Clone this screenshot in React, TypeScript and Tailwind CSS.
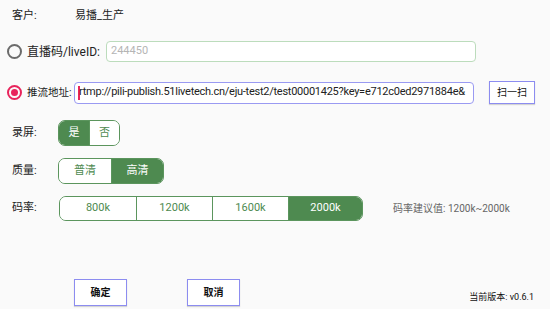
import React, {useState} from 'react';

const font = {fontFamily: 'Roboto, "Noto Sans CJK SC", sans-serif'};

// Radio button in Android style
const Radio = ({checked}: {checked: boolean}) => (
  <span
    className={`flex items-center justify-center w-[15px] h-[15px] rounded-full border-2 ${checked ? 'border-[#e8245c]' : 'border-[#6b6b6b]'}`}>
    {checked && <span className="w-[7px] h-[7px] rounded-full bg-[#e8245c]"/>}
  </span>
);

const Segment = ({items, active, widths}: {items: string[], active: number, widths: string[]}) => (
  <div className="flex rounded-[7px] border border-[#5b955d] overflow-hidden">
    {items.map((item, i) => <div
      key={i}
      className={`flex items-center justify-center text-[11px] ${widths[i]} ${i > 0 ? 'border-l border-[#5b955d]' : ''} ${i === active ? 'bg-[#4e8a50] text-white' : 'bg-white text-[#4e8a50]'}`}>
      {item}
    </div>)}
  </div>
);

const App = () => {
  const [record] = useState(0);
  const [quality] = useState(1);
  const [rate] = useState(3);

  return (
    <div className="w-[550px] h-[309px] bg-[#fafafa] text-[#222] relative overflow-hidden" style={font}>
      {/* customer */}
      <div className="flex items-center h-[20px] mt-[6px] text-[11px]">
        <span className="ml-[12px] w-[63px]">客户:</span>
        <span>易播_生产</span>
      </div>

      {/* liveID */}
      <div className="flex items-center mt-[15px] h-[21px]">
        <span className="ml-[7px]"><Radio checked={false}/></span>
        <span className="ml-[5px] w-[79px] shrink-0 whitespace-nowrap text-[12px]">直播码/liveID:</span>
        <div className="w-[370px] h-[21px] rounded-[4px] border border-[#bcdcbc] bg-white flex items-center px-[4px] text-[11px] text-[#b5b5b5]">
          244450
        </div>
      </div>

      {/* push url */}
      <div className="flex items-center mt-[19px] h-[23px]">
        <span className="ml-[7px]"><Radio checked={true}/></span>
        <span className="ml-[5px] w-[47px] shrink-0 whitespace-nowrap text-[10.5px]">推流地址:</span>
        <div className="w-[400px] shrink-0 h-[22px] rounded-[4px] border border-[#9a9af2] bg-white flex items-center pl-[3px] text-[11px] text-[#222] overflow-hidden whitespace-nowrap">
          <span className="w-[2px] h-[14px] bg-[#e8245c] shrink-0"/>
          <span className="ml-[-1px] tracking-[-0.26px]">rtmp://pili-publish.51livetech.cn/eju-test2/test00001425?key=e712c0ed2971884e&amp;</span>
        </div>
        <button
          className="ml-[15px] w-[46px] h-[23px] shrink-0 border border-[#8c8cf0] bg-white text-[10px] text-[#111] shadow-[0_1px_1px_rgba(0,0,0,0.15)]">
          扫一扫
        </button>
      </div>

      {/* record */}
      <div className="flex items-center mt-[16px] h-[26px]">
        <span className="ml-[12px] w-[46px] text-[11px]">录屏:</span>
        <div className="h-[26px] flex">
          <Segment items={['是', '否']} active={record} widths={['w-[30px]', 'w-[30px]']}/>
        </div>
      </div>

      {/* quality */}
      <div className="flex items-center mt-[12px] h-[26px]">
        <span className="ml-[12px] w-[46px] text-[11px]">质量:</span>
        <div className="h-[26px] flex">
          <Segment items={['普清', '高清']} active={quality} widths={['w-[52px]', 'w-[52px]']}/>
        </div>
      </div>

      {/* bitrate */}
      <div className="flex items-center mt-[12px] h-[25px]">
        <span className="ml-[12px] w-[47px] text-[11px]">码率:</span>
        <div className="h-[25px] flex">
          <Segment items={['800k', '1200k', '1600k', '2000k']} active={rate}
                   widths={['w-[76px]', 'w-[76px]', 'w-[76px]', 'w-[74px]']}/>
        </div>
        <span className="ml-[30px] text-[10px] text-[#666]">码率建议值: 1200k~2000k</span>
      </div>

      {/* actions */}
      <div className="flex items-center mt-[58px] h-[27px]">
        <button
          className="ml-[74px] w-[53px] h-[27px] border border-[#8c8cf0] bg-white text-[10px] font-bold text-[#111] shadow-[0_1px_1px_rgba(0,0,0,0.15)]">
          确定
        </button>
        <button
          className="ml-[60px] w-[53px] h-[27px] border border-[#8c8cf0] bg-white text-[10px] font-bold text-[#111] shadow-[0_1px_1px_rgba(0,0,0,0.15)]">
          取消
        </button>
        <span className="ml-auto mr-[16px] self-end mb-[2px] text-[9px] text-[#111]">当前版本: v0.6.1</span>
      </div>
    </div>
  )
};

export default App;
